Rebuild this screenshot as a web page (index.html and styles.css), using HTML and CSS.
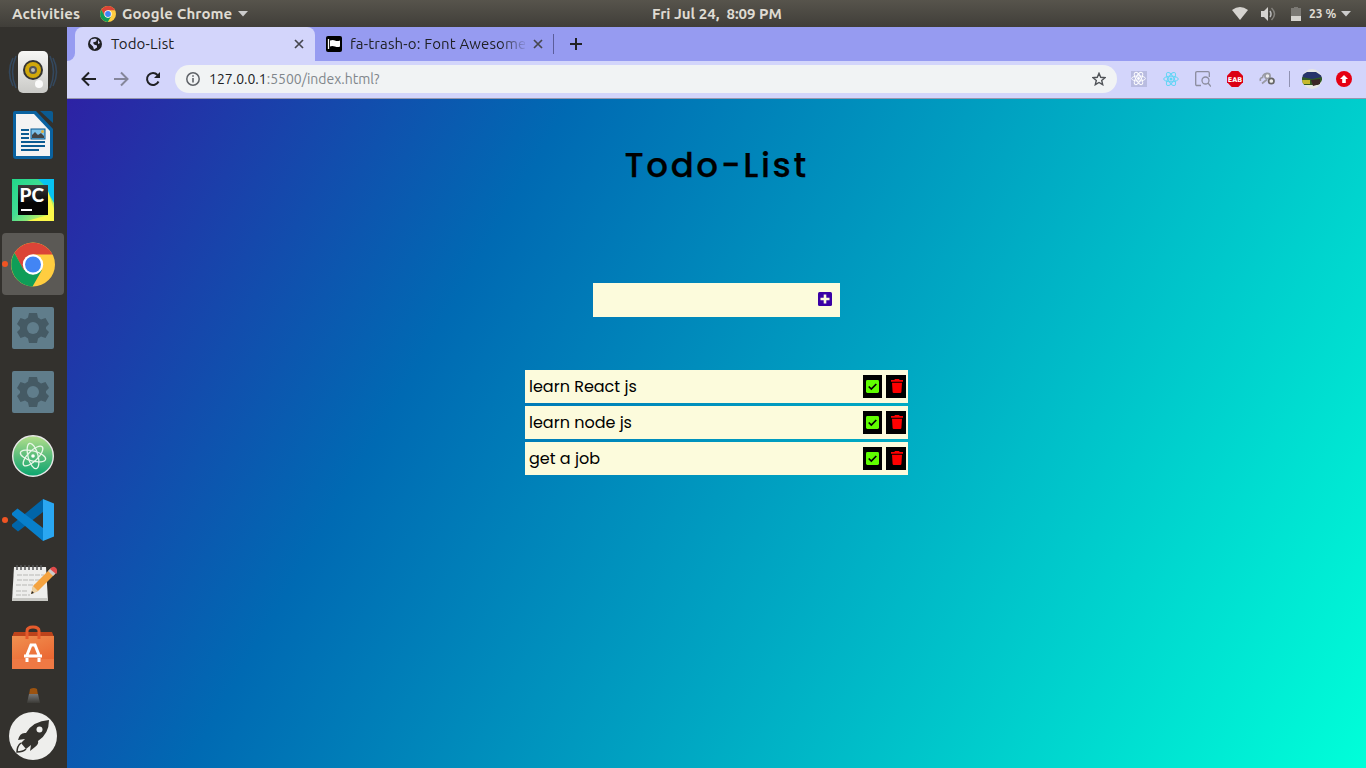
FILE: index.html
```html
<!DOCTYPE html>
<html lang="en">
<head>
<meta charset="utf-8">
<title>Todo-List</title>
<link rel="stylesheet" href="styles.css">
</head>
<body>
<svg class="defs" width="0" height="0">
  <defs>
    <linearGradient id="speaker" x2="0" y2="1"><stop stop-color="#f7f7f5"/><stop offset="1" stop-color="#c9c9c6"/></linearGradient>
    <linearGradient id="pycharm" x2="1" y2="1"><stop stop-color="#21d789"/><stop offset=".45" stop-color="#42dc94"/><stop offset="1" stop-color="#fcf84a"/></linearGradient>
    <linearGradient id="pcbox" x2="0" y2="1"><stop stop-color="#3a3a3a"/><stop offset=".6" stop-color="#050505"/></linearGradient>
    <linearGradient id="atomg" x2="0" y2="1"><stop stop-color="#b5e08c"/><stop offset=".5" stop-color="#5bbd7b"/><stop offset="1" stop-color="#0aa56f"/></linearGradient>
    <linearGradient id="bag" x2=".5" y2="1"><stop stop-color="#f09050"/><stop offset="1" stop-color="#ea6430"/></linearGradient>
    <linearGradient id="brush" x2="0" y2="1"><stop stop-color="#777"/><stop offset="1" stop-color="#3b3a36"/></linearGradient>
    <symbol id="chrome" viewBox="0 0 44 44">
      <circle cx="22" cy="22" r="22" fill="#ffcd40"/>
      <path d="M3.500 10.500A22 22 0 0 1 41.500 12H22L12.500 27.500Z" fill="#db4437"/>
      <path d="M3.500 10.500A22 22 0 0 0 21.500 44L31 27.500 22 32 12.500 27Z" fill="#0f9d58"/>
      <circle cx="22" cy="22" r="10.200" fill="#fff"/><circle cx="22" cy="22" r="8" fill="#4285f4"/>
    </symbol>
    <symbol id="gear" viewBox="0 0 42 42">
      <rect width="42" height="42" rx="2" fill="#607d8b"/>
      <path d="M17 6h8l1 4.500 3 2 4.500-1.500 3.500 6-3 3v2l3 3-3.500 6-4.500-1.500-3 2-1 4.500h-8l-1-4.500-3-2L8.500 31 5 25l3-3v-2l-3-3 3.500-6 4.500 1.500 3-2Z" fill="#455a64"/><circle cx="21" cy="21" r="6" fill="#607d8b"/>
    </symbol>
    <symbol id="react" viewBox="0 0 16 16">
      <g fill="none" stroke="currentColor" stroke-width="1"><ellipse cx="8" cy="8" rx="7.3" ry="2.8"/><ellipse cx="8" cy="8" rx="7.3" ry="2.8" transform="rotate(60 8 8)"/><ellipse cx="8" cy="8" rx="7.3" ry="2.8" transform="rotate(120 8 8)"/></g><circle cx="8" cy="8" r="1.5" fill="currentColor"/>
    </symbol>
    <symbol id="close" viewBox="0 0 10 10"><path d="M1 1l8 8M9 1l-8 8" stroke="currentColor" stroke-width="1.7"/></symbol>
    <symbol id="check" viewBox="0 0 13 13"><rect width="13" height="13" rx="1.4" fill="#60ff00"/><path d="M2.700 6.500l2.600 2.500 5-5" fill="none" stroke="#000" stroke-width="1.700"/></symbol>
    <symbol id="trash" viewBox="0 0 12 14"><path d="M0 1h3.300L4 0h4l.7 1H12v1.800H0ZM1 3.800h10l-.6 9.200q-.1 1-1.200 1H2.800q-1.100 0-1.200-1Z" fill="#f00"/></symbol>
  </defs>
</svg>
<header class="topbar">
  <span class="activities">Activities</span>
  <svg class="app-logo" width="16" height="16"><use href="#chrome"/></svg>
  <span class="app-name">Google Chrome</span>
  <svg class="caret" width="10" height="6"><path d="M0 0h10L5 5.5Z" fill="#ccc"/></svg>
  <span class="clock">Fri Jul 24,&nbsp; 8:09 PM</span>
  <svg class="wifi" width="16" height="13"><path d="M0 3Q8-3 16 3L8 13Z" fill="#d5d3cf"/></svg>
  <svg class="volume" width="16" height="14"><path d="M0 4h3l4-4v14l-4-4H0Z" fill="#d5d3cf"/><path d="M9 4q2 3 0 6" fill="none" stroke="#bbb" stroke-width="1.5"/><path d="M10.500 1q6 6 0 12" fill="none" stroke="#85837e" stroke-width="1.5"/></svg>
  <svg class="battery" width="10" height="14"><path d="M0 1h3V0h4v1h3v13H0Z" fill="#7b7974"/><path d="M0 9h10v5H0Z" fill="#d5d3cf"/></svg>
  <span class="percent">23 %</span>
  <svg class="caret" width="10" height="6"><path d="M0 0h10L5 5.5Z" fill="#ccc"/></svg>
</header>
<div class="desktop">
  <nav class="dock">
    <div class="slot"><svg width="50" height="48" viewBox="0 0 50 48"><g fill="none" stroke="#34485e" stroke-width="1.6"><path d="M5 10q-7 14 0 28M8 8q-7 16 0 32M45 10q7 14 0 28M42 8q7 16 0 32"/></g><rect x="10" y="3" width="30" height="42" rx="5" fill="url(#speaker)"/><circle cx="25" cy="22" r="10" fill="#343432"/><circle cx="25" cy="22" r="8" fill="#d0a80b"/><circle cx="25" cy="22" r="4" fill="#555"/><circle cx="25" cy="22" r="2" fill="#bbb"/><circle cx="31" cy="36" r="4" fill="#fafafa"/></svg></div>
    <div class="slot writer"><svg width="42" height="48" viewBox="0 0 42 48"><path d="M2 0h22l17 18v27q0 3-3 3H4q-3 0-3-3V2q0-2 2-2Z" fill="#0a62a0"/><path d="M28 0h11q2 0 2 2v10Z" fill="#0b5b92"/><path d="M4 3h18l16 17v25H4Z" fill="#f3f3f3"/><path d="M9 19h8M9 23h8M9 27h8M9 31h24M9 35h24M9 39h18" stroke="#0b5b92" stroke-width="2"/><rect x="19" y="18" width="14" height="10" fill="#7cc0e8" stroke="#0b5b92"/><path d="M20 27v-3l3-3 3 3 3-2 3 3v2Z" fill="#444"/><circle cx="30.500" cy="20.500" r="1.500" fill="#e3b13c"/></svg></div>
    <div class="slot"><svg width="42" height="42" viewBox="0 0 42 42"><path d="M0 0h42v42H0Z" fill="url(#pycharm)"/><path d="M26 0h16v24L32 6Z" fill="#07c3f2"/><path d="M36 12l6 18v12H15l21-6Z" fill="#fcf84a"/><path d="M6 6h30v30H6Z" fill="url(#pcbox)"/><text x="7.500" y="23" class="pc">PC</text><path d="M9 30h11v2H9Z" fill="#fff"/></svg></div>
    <div class="slot active"><svg width="44" height="45"><use href="#chrome"/></svg></div>
    <div class="slot"><svg width="42" height="42"><use href="#gear"/></svg></div>
    <div class="slot"><svg width="42" height="42"><use href="#gear"/></svg></div>
    <div class="slot"><svg width="42" height="42" viewBox="0 0 42 42"><circle cx="21" cy="21" r="20.300" fill="url(#atomg)" stroke="#e8e8e8" stroke-width="1.400"/><g fill="none" stroke="#e9f7e8" stroke-width="1.300"><ellipse cx="21" cy="21" rx="13" ry="5" transform="rotate(15 21 21)"/><ellipse cx="21" cy="21" rx="13" ry="5" transform="rotate(75 21 21)"/><ellipse cx="21" cy="21" rx="13" ry="5" transform="rotate(135 21 21)"/></g><circle cx="21" cy="21" r="1.800" fill="#fff"/></svg></div>
    <div class="slot running"><svg width="42" height="42" viewBox="0 0 42 42"><path d="M31 0v13L6 32.500 0 27.500v-2Z" fill="#0065a9"/><path d="M5.500 9.500L31 29v13L0 16v-2Z" fill="#0880cc"/><path d="M31 0l11 4.500v33L31 42Z" fill="#2aa7f2"/></svg></div>
    <div class="slot notes"><svg width="46" height="42" viewBox="0 0 46 42"><path d="M3 4h32l2 34H1Z" fill="#eeeeec"/><path d="M1 35h36v3H1Z" fill="#c8c8c4"/><path d="M6 2v5M10 2v5M14 2v5M18 2v5M22 2v5M26 2v5M30 2v5" stroke="#555" stroke-width="1.500"/><path d="M6 12h27M6 17h24M5 22h22M5 28h12M5 32h14" stroke="#b8b8b5" stroke-dasharray="5 1"/><path d="M20 31l2-8L39 6l5 5-17 17Z" fill="#f4a340"/><path d="M20 31l2-8 5 5Z" fill="#ead1a5"/><path d="M20 31l1-3 2 2Z" fill="#222"/><path d="M37 8l3-3 5 5-3 3Z" fill="#ccc"/><path d="M39 6q3-4 6-1t0 6Z" fill="#e04b4b"/></svg></div>
    <div class="slot store"><svg width="42" height="44" viewBox="0 0 42 44"><path d="M2 7h38l2 5H0Z" fill="#bd431b"/><path d="M0 11h42v33H0Z" fill="url(#bag)"/><path d="M0 34h42v10H0Z" fill="#ef7944"/><path d="M15 14V6q0-4 6-4t6 4v8" fill="none" stroke="#e65b2c" stroke-width="3"/><path d="M15 30l4-10h4l4 10M12 31h18M15 33v4M27 33v4" fill="none" stroke="#fff" stroke-width="3"/></svg></div>
    <svg class="peek" width="14" height="15"><path d="M3 1q4-2 7 0l1 6H2Z" fill="#9c5310"/><path d="M2 6h9l2 9H0Z" fill="url(#brush)"/></svg>
    <div class="launcher"><svg width="48" height="48" viewBox="0 0 48 48"><circle cx="24" cy="24" r="24" fill="#eeeeec"/><path d="M40 8Q24 9 17 21q-6-1-8 7l7-1-4 4 5 6 5-4-1 6 5-4q4-3 3-6Q40 22 40 8Z" fill="#33312d"/><circle cx="30.500" cy="17.500" r="3" fill="#eeeeec"/><path d="M12 31q-4 3-4 9 6 0 9-3" fill="none" stroke="#33312d" stroke-width="1.500"/></svg></div>
  </nav>
  <main class="browser">
    <div class="tabs">
      <div class="tab current">
        <svg width="14" height="14" viewBox="0 0 14 14"><circle cx="7" cy="7" r="7" fill="#202124"/><path d="M3 2.500l4-1 2 1-1 2-3 1 1 2 3 1v2l-3 2-1-3-3-3Z M10 3l2 3-2 1Z" fill="#d3d5fb"/></svg>
        <span class="tab-title">Todo-List</span>
        <svg class="close" width="10" height="10"><use href="#close"/></svg>
      </div>
      <div class="tab other">
        <svg width="16" height="16"><rect width="16" height="16" rx="2" fill="#000"/><path d="M2.500 3v10" stroke="#fff" stroke-width="1.300"/><path d="M4 4.500q3-1 5 0t5 0v6q-2 1-5 0t-5 0Z" fill="#fff"/></svg>
        <span class="tab-title faded">fa-trash-o: Font Awesome</span>
        <svg class="close" width="10" height="10"><use href="#close"/></svg>
      </div>
      <span class="tab-rule"></span>
      <svg class="new-tab" width="12" height="12"><path d="M6 0v12M0 6h12" stroke="#202124" stroke-width="2"/></svg>
    </div>
    <div class="toolbar">
      <svg width="16" height="16"><path d="M15 8H2M8 1.500L1.500 8 8 14.500" fill="none" stroke="#202124" stroke-width="2"/></svg>
      <svg width="16" height="16"><path d="M1 8h13M8 1.500L14.500 8 8 14.500" fill="none" stroke="#85869a" stroke-width="2"/></svg>
      <svg width="16" height="16"><path d="M13.500 10.500A6 6 0 1 1 12.500 4" fill="none" stroke="#202124" stroke-width="2"/><path d="M15 1v6H9Z" fill="#202124"/></svg>
      <div class="address">
        <svg width="14" height="14"><circle cx="7" cy="7" r="6.200" fill="none" stroke="#5f6368" stroke-width="1.500"/><path d="M7 6v4.500M7 3.300v1.500" stroke="#5f6368" stroke-width="1.600"/></svg>
        <span class="url"><b>127.0.0.1</b>:5500/index.html?</span>
        <svg class="star" width="14" height="14" viewBox="0 0 14 14"><path d="M7 1.300l1.700 4 4.300.4-3.300 2.800 1 4.200L7 10.500l-3.700 2.200 1-4.200L1 5.700l4.300-.4Z" fill="none" stroke="#505358" stroke-width="1.400"/></svg>
      </div>
      <div class="extensions">
        <span class="react-box"><svg width="15" height="15"><use href="#react"/></svg></span>
        <svg class="react-blue" width="16" height="16"><use href="#react"/></svg>
        <svg width="16" height="16" fill="none" stroke="#8c8d9e" stroke-width="1.300"><path d="M6 14.500H2q-1.300 0-1.300-1.300V2Q.7.700 2 .700h11q1.300 0 1.300 1.300v4"/><circle cx="10.500" cy="9.500" r="3.500"/><path d="M13 12l3 3.500"/></svg>
        <svg width="16" height="16"><path d="M4.700 0h6.600L16 4.700v6.600L11.300 16H4.700L0 11.300V4.700Z" fill="#dc0014"/><text x="8" y="10.500" class="eab">EAB</text></svg>
        <svg width="16" height="16" fill="none" stroke="#999aa3" stroke-width="1.700"><path d="M1.500 10q-1-3 2-3.500Q4 2.500 8 2.500M3 12.500l5-4"/><circle cx="8.500" cy="5" r="2.600" fill="#eee"/><circle cx="12.300" cy="10" r="2.700" fill="#eee" stroke="#666"/></svg>
      </div>
      <span class="tool-rule"></span>
      <svg class="avatar" width="20" height="20" viewBox="0 0 20 20"><clipPath id="face"><circle cx="10" cy="10" r="10"/></clipPath><g clip-path="url(#face)"><path d="M0 0h20v20H0Z" fill="#e6e6e4"/><path d="M0 6l5-3 9 0 6 4v4H0Z" fill="#27346a"/><path d="M0 8l10 2 10-2v4l-4 4H0Z" fill="#315a22"/><path d="M0 11h8v4H0Z" fill="#c6b92c"/><path d="M9 11l9-1v5l-7 2Z" fill="#3b2526"/></g></svg>
      <svg class="update" width="16" height="16"><circle cx="8" cy="8" r="8" fill="#e60012"/><path d="M8 4l4 4H9.800v4H6.200V8H4Z" fill="#fff"/></svg>
    </div>
    <section class="page">
      <h1>Todo-List</h1>
      <form class="entry"><svg width="14" height="14"><rect width="14" height="14" rx="1.500" fill="#3a00a5"/><path d="M7 2.500v9M2.500 7h9" stroke="#fcfbdc" stroke-width="2.600"/></svg></form>
      <ul class="todos">
        <li><span>learn React js</span><i class="done"><svg width="13" height="13"><use href="#check"/></svg></i><i class="remove"><svg width="12" height="14"><use href="#trash"/></svg></i></li>
        <li><span>learn node js</span><i class="done"><svg width="13" height="13"><use href="#check"/></svg></i><i class="remove"><svg width="12" height="14"><use href="#trash"/></svg></i></li>
        <li><span>get a job</span><i class="done"><svg width="13" height="13"><use href="#check"/></svg></i><i class="remove"><svg width="12" height="14"><use href="#trash"/></svg></i></li>
      </ul>
    </section>
  </main>
</div>
</body>
</html>
```

FILE: styles.css
```css
* { box-sizing: border-box; }
body { margin: 0; width: 1366px; height: 768px; overflow: hidden; font-family: Ubuntu, "Noto Sans", sans-serif; }
svg { display: block; flex: none; }
.defs { position: absolute; }
.topbar { height: 27px; display: flex; align-items: center; background: linear-gradient(#57544c, #403e39); color: #dfdbd2; font-size: 15px; line-height: 17px; font-weight: 600; padding: 0 15px 0 12px; white-space: nowrap; }
.topbar span { flex: none; padding-bottom: 1px; }
.activities { width: 88px; letter-spacing: .15px; }
.app-name { width: 111px; margin-left: 6px; letter-spacing: .1px; }
.caret { margin-left: 5px; }
.clock { width: 130px; margin-left: 404px; }
.wifi { margin-left: 450px; }
.volume { margin-left: 13px; }
.battery { margin-left: 14px; }
.percent { width: 28px; margin-left: 8px; font-size: 12px; }
.percent + .caret { margin-left: 4px; }
.desktop { display: flex; height: 741px; }
.dock { width: 67px; background: #33312d; padding-top: 14px; display: flex; flex-direction: column; }
.slot { position: relative; width: 62px; height: 62px; margin: 0 0 2px 2px; display: flex; align-items: center; justify-content: center; flex: none; }
.writer, .store { padding-bottom: 2px; }
.notes { padding: 0 0 0 2px; }
.active { background: #5b5955; border-radius: 4px; }
.active::before, .running::before { content: ""; position: absolute; left: 0; top: 28px; width: 6px; height: 6px; border-radius: 50%; background: #f05423; }
.pc { font: 900 19px Lato, sans-serif; fill: #fff; }
.peek { margin: 7px 0 0 27px; }
.launcher { margin: 9px 0 0 9px; }
.browser { width: 1299px; display: flex; flex-direction: column; }
.tabs { height: 34px; background: linear-gradient(90deg, #d3d5fb 0 8px, #969bf1 8px); display: flex; align-items: center; }
.tabs::before { content: ""; width: 8px; height: 34px; background: #969bf1; border-radius: 0 0 8px 0; }
.tab { height: 34px; display: flex; align-items: center; color: #202124; font-size: 15px; }
.current { width: 240px; padding: 0 11px 0 13px; background: #d3d5fb; border-radius: 8px 8px 0 0; }
.current .tab-title { margin-left: 9px; }
.other { width: 228px; padding-left: 11px; }
.tab-title { white-space: nowrap; letter-spacing: .15px; padding-bottom: 1px; }
.close { margin-left: auto; color: #46474f; }
.faded { width: 175px; margin-left: 8px; overflow: hidden; mask-image: linear-gradient(90deg, #000 150px, transparent 178px); }
.other .close { margin-left: 8px; }
.tab-rule { width: 1px; height: 20px; background: #5b5d9b; margin-left: 10px; }
.new-tab { margin-left: 16px; }
.toolbar { height: 38px; display: flex; align-items: center; background: #d3d5fb; border-bottom: 1px solid #9697ad; padding: 0 14px 1px; gap: 16px; }
.address { width: 942px; height: 28px; margin-left: -2px; border-radius: 14px; background: #f1f3f4; padding: 0 11px; display: flex; align-items: center; font-size: 14px; }
.url { margin-left: 9px; color: #80868b; white-space: nowrap; }
.url b { font-weight: 400; color: #202124; }
.star { margin-left: auto; }
.extensions { display: flex; gap: 16px; align-items: center; margin-left: -2px; }
.react-box { width: 16px; height: 16px; background: #b9bce0; color: #fff; display: flex; }
.react-blue { color: #61d5f5; }
.eab { font: 700 6.500px "DejaVu Sans", sans-serif; fill: #fff; text-anchor: middle; }
.tool-rule { width: 1px; height: 16px; background: #9092b2; margin-left: -2px; }
.avatar { margin-left: -4px; }
.update { margin-left: -2px; }
.page { flex: 1; display: flex; flex-direction: column; align-items: center; background: linear-gradient(120deg, #2d22a4 0%, #006ab3 30%, #00ffd9 100%); font-family: Poppins, Inter, sans-serif; color: #000; }
h1 { margin: 44px 0 0; width: 184px; height: 44px; font-size: 34px; line-height: 44px; font-weight: 500; letter-spacing: 2.65px; white-space: nowrap; -webkit-text-stroke: .25px #000; }
.entry { width: 247px; height: 34px; margin-top: 96px; background: #fcfbdc; display: flex; justify-content: flex-end; padding: 9px 8px; }
.todos { list-style: none; margin: 53px 0 0; padding: 0; width: 383px; display: grid; gap: 3px; }
.todos li { height: 33px; padding: 0 2px 0 4px; display: flex; align-items: center; background: #fcfbdc; font-size: 16px; }
.done, .remove { width: 19px; height: 23px; background: #000; display: flex; align-items: center; justify-content: center; }
.done { margin-left: auto; padding-bottom: 1px; }
.remove { width: 20px; margin-left: 4px; padding: 0 0 1px 2px; }
```
